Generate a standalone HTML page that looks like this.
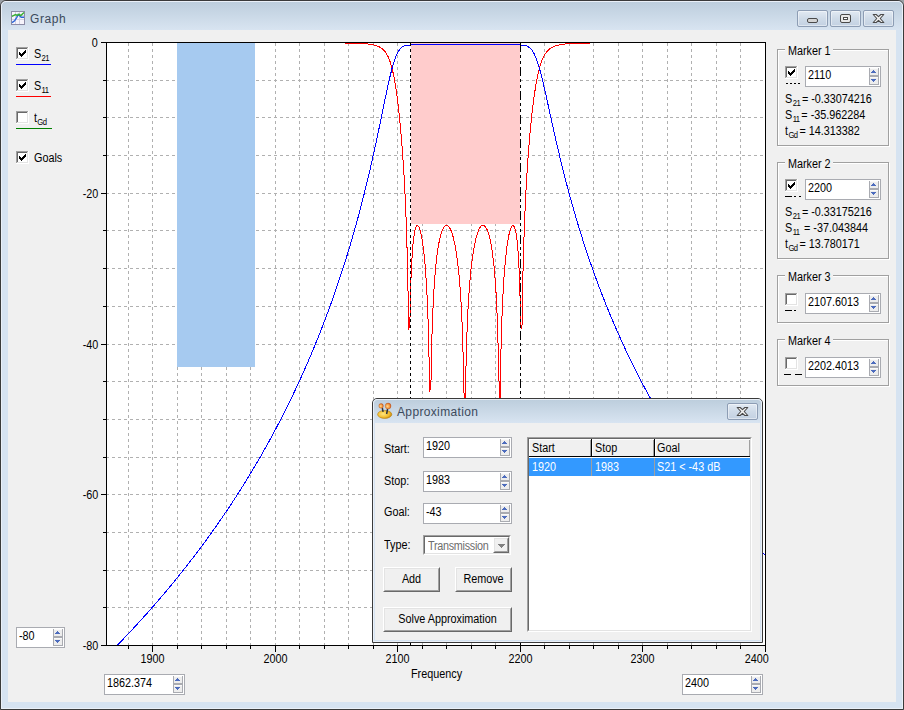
<!DOCTYPE html><html><head><meta charset="utf-8"><style>
*{margin:0;padding:0;box-sizing:content-box}
html,body{width:904px;height:710px;overflow:hidden;background:#9aa0a6}
body{position:relative;font-family:"Liberation Sans",sans-serif;font-size:11px;color:#000}
.t{position:absolute;white-space:pre;line-height:13px;font-size:12px;transform:scaleX(0.9);transform-origin:0 0}
.c{transform-origin:50% 0}.r{transform-origin:100% 0}
.abs{position:absolute}
.spin{position:absolute;border:1px solid #a9abb1;background:#fff}
.sp{position:absolute}
.cb{position:absolute}
svg{position:absolute;overflow:visible}
</style></head><body>
<div class="abs" style="left:0;top:0;width:902px;height:708px;border:1px solid #3a3a3a;border-radius:6px 6px 0 0;background:#d6e3f1"></div>
<div class="abs" style="left:1px;top:1px;width:900px;height:706px;border:1px solid #eaf0f8;border-radius:5px 5px 0 0;background:linear-gradient(#bdcedd,#d8e4f1 28px,#d6e3f1 28px)"></div>
<div class="abs" style="left:8px;top:30px;width:888px;height:672px;background:#f0f0f0"></div>
<svg style="left:11px;top:11px" width="14" height="14" shape-rendering="crispEdges"><rect x="0.5" y="0.5" width="13" height="13" fill="#f6f4fb" stroke="#8c8ca6"/><path d="M4.5 1 V13 M8.5 1 V13 M1 4.5 H13 M1 8.5 H13" stroke="#d4d2e4" stroke-width="1"/><path d="M1 11.6 L3.6 9.8 L5.8 6.3 L7.1 3.6 L8.9 5 L10.2 6.3 L13 6.3" stroke="#2a64d8" stroke-width="1.4" fill="none" shape-rendering="auto"/><path d="M0.9 5.4 L4.5 3.6 L6.3 4.5 L8 3.2 L9.8 4.5 L13 1.4" stroke="#38b030" stroke-width="1.4" fill="none" shape-rendering="auto"/></svg>
<div class="t" style="transform:none;left:30px;top:12px;font-size:12px;line-height:15px;letter-spacing:0.6px;color:#3c4a5c">Graph</div>
<div class="abs" style="left:797px;top:10px;width:29px;height:15px;border:1px solid #8d9db4;border-radius:2px;background:linear-gradient(#e2eaf3,#cfdbe8 50%,#c3d1e2);box-shadow:inset 0 0 0 1px rgba(255,255,255,0.45)"></div>
<svg style="left:797px;top:10px" width="31" height="17"><rect x="10.5" y="8.5" width="10" height="4" rx="1.5" fill="#d4d4d4" stroke="#4a4a4a"/></svg>
<div class="abs" style="left:830px;top:10px;width:29px;height:15px;border:1px solid #8d9db4;border-radius:2px;background:linear-gradient(#e2eaf3,#cfdbe8 50%,#c3d1e2);box-shadow:inset 0 0 0 1px rgba(255,255,255,0.45)"></div>
<svg style="left:830px;top:10px" width="31" height="17"><rect x="10.5" y="4.5" width="10" height="8" rx="1.5" fill="#e8e8e8" stroke="#4a4a4a"/><rect x="13.5" y="7.5" width="4" height="2" fill="#fff" stroke="#4a4a4a"/></svg>
<div class="abs" style="left:863px;top:10px;width:29px;height:15px;border:1px solid #8d9db4;border-radius:2px;background:linear-gradient(#e2eaf3,#cfdbe8 50%,#c3d1e2);box-shadow:inset 0 0 0 1px rgba(255,255,255,0.45)"></div>
<svg style="left:863px;top:10px" width="31" height="17"><path d="M10.2 4.5 L13.2 4.5 L15.5 6.6 L17.8 4.5 L20.8 4.5 L17.2 8.5 L20.8 12.5 L17.8 12.5 L15.5 10.4 L13.2 12.5 L10.2 12.5 L13.8 8.5 Z" fill="#f2f2f2" stroke="#4a4a4a" stroke-width="1.1" stroke-linejoin="round"/></svg>
<svg class="cb" style="left:16px;top:47px" width="13" height="13" shape-rendering="crispEdges"><rect x="0" y="0" width="13" height="13" fill="#ffffff"/><rect x="0" y="0" width="12" height="1" fill="#a0a0a0"/><rect x="0" y="0" width="1" height="12" fill="#a0a0a0"/><rect x="1" y="1" width="10" height="1" fill="#696969"/><rect x="1" y="1" width="1" height="10" fill="#696969"/><rect x="1" y="11" width="11" height="1" fill="#e3e3e3"/><rect x="11" y="1" width="1" height="11" fill="#e3e3e3"/><path d="M9 3h1v1h-1zM8 4h2v1h-2zM3 5h1v1h-1zM7 5h3v1h-3zM3 6h2v1h-2zM6 6h3v1h-3zM3 7h5v1h-5zM4 8h3v1h-3zM5 9h1v1h-1z" fill="#000"/></svg>
<svg class="cb" style="left:16px;top:79px" width="13" height="13" shape-rendering="crispEdges"><rect x="0" y="0" width="13" height="13" fill="#ffffff"/><rect x="0" y="0" width="12" height="1" fill="#a0a0a0"/><rect x="0" y="0" width="1" height="12" fill="#a0a0a0"/><rect x="1" y="1" width="10" height="1" fill="#696969"/><rect x="1" y="1" width="1" height="10" fill="#696969"/><rect x="1" y="11" width="11" height="1" fill="#e3e3e3"/><rect x="11" y="1" width="1" height="11" fill="#e3e3e3"/><path d="M9 3h1v1h-1zM8 4h2v1h-2zM3 5h1v1h-1zM7 5h3v1h-3zM3 6h2v1h-2zM6 6h3v1h-3zM3 7h5v1h-5zM4 8h3v1h-3zM5 9h1v1h-1z" fill="#000"/></svg>
<svg class="cb" style="left:16px;top:111px" width="13" height="13" shape-rendering="crispEdges"><rect x="0" y="0" width="13" height="13" fill="#ffffff"/><rect x="0" y="0" width="12" height="1" fill="#a0a0a0"/><rect x="0" y="0" width="1" height="12" fill="#a0a0a0"/><rect x="1" y="1" width="10" height="1" fill="#696969"/><rect x="1" y="1" width="1" height="10" fill="#696969"/><rect x="1" y="11" width="11" height="1" fill="#e3e3e3"/><rect x="11" y="1" width="1" height="11" fill="#e3e3e3"/></svg>
<svg class="cb" style="left:16px;top:151px" width="13" height="13" shape-rendering="crispEdges"><rect x="0" y="0" width="13" height="13" fill="#ffffff"/><rect x="0" y="0" width="12" height="1" fill="#a0a0a0"/><rect x="0" y="0" width="1" height="12" fill="#a0a0a0"/><rect x="1" y="1" width="10" height="1" fill="#696969"/><rect x="1" y="1" width="1" height="10" fill="#696969"/><rect x="1" y="11" width="11" height="1" fill="#e3e3e3"/><rect x="11" y="1" width="1" height="11" fill="#e3e3e3"/><path d="M9 3h1v1h-1zM8 4h2v1h-2zM3 5h1v1h-1zM7 5h3v1h-3zM3 6h2v1h-2zM6 6h3v1h-3zM3 7h5v1h-5zM4 8h3v1h-3zM5 9h1v1h-1z" fill="#000"/></svg>
<div class="t" style="left:34px;top:48px">S<span style="font-size:8.5px;position:relative;top:2.5px;margin-left:0.3px;letter-spacing:-0.5px">21</span></div>
<div class="t" style="left:34px;top:80px">S<span style="font-size:8.5px;position:relative;top:2.5px;margin-left:0.3px;letter-spacing:-0.5px">11</span></div>
<div class="t" style="left:34px;top:112px">t<span style="font-size:8.5px;position:relative;top:2.5px;margin-left:0.3px;letter-spacing:-0.5px">Gd</span></div>
<div class="t" style="left:34px;top:152px">Goals</div>
<div class="abs" style="left:16px;top:64px;width:35px;height:1px;background:#0000ff"></div>
<div class="abs" style="left:16px;top:96px;width:35px;height:1px;background:#ff0000"></div>
<div class="abs" style="left:16px;top:128px;width:36px;height:1px;background:#008000"></div>
<div class="spin" style="left:16px;top:627px;width:47px;height:19px">
<div class="t" style="left:2px;top:2px">-80</div>
<svg class="sp" style="left:36px;top:1px" width="10" height="17" shape-rendering="crispEdges"><rect x="1" y="0" width="8" height="16" fill="#ededed"/><rect x="1" y="0" width="8" height="1" fill="#fafafa"/><rect x="1" y="9" width="8" height="1" fill="#fafafa"/><rect x="0" y="0" width="1" height="17" fill="#a9abb1"/><rect x="9" y="0" width="1" height="17" fill="#a9abb1"/><rect x="0" y="16" width="10" height="1" fill="#a9abb1"/><rect x="0" y="7" width="10" height="2" fill="#a9abb1"/><path d="M4 2h1v1h-1zM3 3h3v1h-3zM2 4h5v1h-5zM2 11h5v1h-5zM3 12h3v1h-3zM4 13h1v1h-1z" fill="#4d6cbd"/></svg>
</div>
<div class="spin" style="left:104px;top:674px;width:79px;height:19px">
<div class="t" style="left:2px;top:2px">1862.374</div>
<svg class="sp" style="left:68px;top:1px" width="10" height="17" shape-rendering="crispEdges"><rect x="1" y="0" width="8" height="16" fill="#ededed"/><rect x="1" y="0" width="8" height="1" fill="#fafafa"/><rect x="1" y="9" width="8" height="1" fill="#fafafa"/><rect x="0" y="0" width="1" height="17" fill="#a9abb1"/><rect x="9" y="0" width="1" height="17" fill="#a9abb1"/><rect x="0" y="16" width="10" height="1" fill="#a9abb1"/><rect x="0" y="7" width="10" height="2" fill="#a9abb1"/><path d="M4 2h1v1h-1zM3 3h3v1h-3zM2 4h5v1h-5zM2 11h5v1h-5zM3 12h3v1h-3zM4 13h1v1h-1z" fill="#4d6cbd"/></svg>
</div>
<div class="spin" style="left:682px;top:674px;width:79px;height:19px">
<div class="t" style="left:2px;top:2px">2400</div>
<svg class="sp" style="left:68px;top:1px" width="10" height="17" shape-rendering="crispEdges"><rect x="1" y="0" width="8" height="16" fill="#ededed"/><rect x="1" y="0" width="8" height="1" fill="#fafafa"/><rect x="1" y="9" width="8" height="1" fill="#fafafa"/><rect x="0" y="0" width="1" height="17" fill="#a9abb1"/><rect x="9" y="0" width="1" height="17" fill="#a9abb1"/><rect x="0" y="16" width="10" height="1" fill="#a9abb1"/><rect x="0" y="7" width="10" height="2" fill="#a9abb1"/><path d="M4 2h1v1h-1zM3 3h3v1h-3zM2 4h5v1h-5zM2 11h5v1h-5zM3 12h3v1h-3zM4 13h1v1h-1z" fill="#4d6cbd"/></svg>
</div>
<svg style="left:0;top:0" width="904" height="710" shape-rendering="crispEdges"><rect x="106" y="42" width="660" height="604" fill="#fff"/><path d="M128.5 43V645M152.5 43V645M177.5 43V645M201.5 43V645M226.5 43V645M250.5 43V645M275.5 43V645M299.5 43V645M324.5 43V645M348.5 43V645M373.5 43V645M397.5 43V645M422.5 43V645M446.5 43V645M471.5 43V645M495.5 43V645M520.5 43V645M544.5 43V645M569.5 43V645M593.5 43V645M618.5 43V645M642.5 43V645M667.5 43V645M691.5 43V645M716.5 43V645M740.5 43V645M106 80.5H765M106 117.5H765M106 155.5H765M106 193.5H765M106 230.5H765M106 268.5H765M106 306.5H765M106 344.5H765M106 381.5H765M106 419.5H765M106 457.5H765M106 494.5H765M106 532.5H765M106 570.5H765M106 607.5H765" stroke="#b0b0b0" stroke-width="1" stroke-dasharray="3 3" fill="none"/><rect x="177" y="43" width="78" height="324" fill="#a6caf0"/><rect x="411" y="43" width="109" height="181" fill="#ffcccc"/><polyline points="344.82,43.01 345.68,43.02 346.84,43.04 348.01,43.06 349.18,43.09 350.35,43.11 351.51,43.14 352.68,43.17 353.85,43.20 355.02,43.23 356.18,43.27 357.35,43.31 358.52,43.36 359.69,43.41 360.85,43.47 362.02,43.53 363.19,43.60 364.36,43.68 365.52,43.77 366.69,43.87 367.86,43.99 369.03,44.13 370.19,44.28 371.36,44.46 372.53,44.67 373.69,44.91 374.86,45.20 376.03,45.54 377.20,45.93 378.36,46.41 379.53,46.97 380.70,47.65 381.87,48.47 383.03,49.45 384.20,50.64 385.37,52.08 386.54,53.82 387.70,55.93 388.87,58.48 390.04,61.55 391.21,65.24 392.37,69.64 393.54,74.83 394.71,80.93 395.88,88.01 397.04,96.17 398.21,105.50 399.38,116.12 400.54,128.17 401.71,141.88 402.88,157.61 404.05,175.95 405.21,198.01 406.38,225.99 407.55,265.29 408.72,330.47 409.88,321.86 411.05,276.56 412.22,253.48 413.39,240.14 414.55,232.15 415.72,227.65 416.89,225.70 418.06,225.81 419.22,227.70 420.39,231.28 421.56,236.54 422.73,243.64 423.89,252.87 425.06,264.79 426.23,280.45 427.39,301.94 428.56,334.38 429.73,391.78 430.90,384.55 432.06,331.84 433.23,302.14 434.40,282.46 435.57,268.18 436.73,257.31 437.90,248.81 439.07,242.11 440.24,236.82 441.40,232.71 442.57,229.60 443.74,227.38 444.91,225.97 446.07,225.31 447.24,225.38 448.41,226.15 449.58,227.64 450.74,229.87 451.91,232.86 453.08,236.70 454.24,241.47 455.41,247.32 456.58,254.44 457.75,263.15 458.91,273.92 460.08,287.55 461.25,305.52 462.42,330.97 463.58,372.32 464.75,428.00 465.92,368.84 467.09,329.04 468.25,304.26 469.42,286.67 470.59,273.28 471.76,262.68 472.92,254.11 474.09,247.09 475.26,241.32 476.43,236.61 477.59,232.83 478.76,229.86 479.93,227.66 481.09,226.18 482.26,225.39 483.43,225.30 484.60,225.90 485.76,227.24 486.93,229.35 488.10,232.31 489.27,236.23 490.43,241.24 491.60,247.58 492.77,255.55 493.94,265.67 495.10,278.77 496.27,296.44 497.44,322.07 498.61,364.81 499.77,412.25 500.94,350.79 502.11,312.58 503.28,288.38 504.44,271.13 505.61,258.09 506.78,247.96 507.94,240.07 509.11,234.03 510.28,229.64 511.45,226.81 512.61,225.57 513.78,226.05 514.95,228.55 516.12,233.59 517.28,242.13 518.45,256.09 519.62,279.98 520.79,326.13 521.95,328.52 523.12,266.16 524.29,227.98 525.46,200.61 526.62,178.99 527.79,160.97 528.96,145.49 530.13,131.95 531.29,120.02 532.46,109.45 533.63,100.09 534.79,91.84 535.96,84.61 537.13,78.32 538.30,72.88 539.46,68.23 540.63,64.27 541.80,60.92 542.97,58.11 544.13,55.75 545.30,53.78 546.47,52.14 547.64,50.77 548.80,49.62 549.97,48.67 551.14,47.87 552.31,47.19 553.47,46.63 554.64,46.15 555.81,45.74 556.98,45.40 558.14,45.10 559.31,44.85 560.48,44.63 561.64,44.44 562.81,44.27 563.98,44.13 565.15,44.00 566.31,43.89 567.48,43.79 568.65,43.71 569.82,43.63 570.98,43.56 572.15,43.50 573.32,43.44 574.49,43.39 575.65,43.35 576.82,43.31 577.99,43.27 579.16,43.23 580.32,43.20 581.49,43.17 582.66,43.15 583.82,43.12 584.99,43.10 586.16,43.08 587.33,43.06 588.49,43.04 589.66,43.02 590.83,43.00 591.69,42.99" fill="none" stroke="#ff0000" stroke-width="1"/><polyline points="106.50,645.50 107.05,645.50 107.60,645.50 108.15,645.50 108.70,645.50 109.25,645.50 109.80,645.50 110.35,645.50 110.90,645.50 111.45,645.50 112.00,645.50 112.55,645.50 113.10,645.50 113.65,645.50 114.19,645.50 114.74,645.50 115.29,645.50 115.84,645.50 116.39,645.50 116.94,645.50 117.49,645.07 118.04,644.50 118.59,643.93 119.14,643.36 119.69,642.79 120.24,642.22 120.79,641.65 121.34,641.08 121.89,640.50 122.44,639.93 122.99,639.35 123.54,638.78 124.09,638.20 124.64,637.62 125.19,637.04 125.74,636.46 126.29,635.88 126.84,635.30 127.39,634.72 127.94,634.14 128.48,633.55 129.03,632.97 129.58,632.38 130.13,631.80 130.68,631.21 131.23,630.62 131.78,630.03 132.33,629.44 132.88,628.85 133.43,628.26 133.98,627.66 134.53,627.07 135.08,626.47 135.63,625.88 136.18,625.28 136.73,624.68 137.28,624.08 137.83,623.48 138.38,622.88 138.93,622.28 139.48,621.68 140.03,621.07 140.58,620.47 141.13,619.86 141.68,619.26 142.23,618.65 142.78,618.04 143.32,617.43 143.87,616.82 144.42,616.21 144.97,615.60 145.52,614.98 146.07,614.37 146.62,613.75 147.17,613.14 147.72,612.52 148.27,611.90 148.82,611.28 149.37,610.66 149.92,610.04 150.47,609.42 151.02,608.79 151.57,608.17 152.12,607.54 152.67,606.92 153.22,606.29 153.77,605.66 154.32,605.03 154.87,604.40 155.42,603.77 155.97,603.13 156.52,602.50 157.07,601.86 157.62,601.23 158.16,600.59 158.71,599.95 159.26,599.31 159.81,598.67 160.36,598.03 160.91,597.38 161.46,596.74 162.01,596.09 162.56,595.45 163.11,594.80 163.66,594.15 164.21,593.50 164.76,592.85 165.31,592.20 165.86,591.55 166.41,590.89 166.96,590.24 167.51,589.58 168.06,588.92 168.61,588.26 169.16,587.60 169.71,586.94 170.26,586.28 170.81,585.61 171.36,584.95 171.91,584.28 172.45,583.61 173.00,582.95 173.55,582.28 174.10,581.60 174.65,580.93 175.20,580.26 175.75,579.58 176.30,578.91 176.85,578.23 177.40,577.55 177.95,576.87 178.50,576.19 179.05,575.51 179.60,574.82 180.15,574.14 180.70,573.45 181.25,572.77 181.80,572.08 182.35,571.39 182.90,570.69 183.45,570.00 184.00,569.31 184.55,568.61 185.10,567.92 185.65,567.22 186.20,566.52 186.75,565.82 187.29,565.12 187.84,564.41 188.39,563.71 188.94,563.00 189.49,562.29 190.04,561.58 190.59,560.87 191.14,560.16 191.69,559.45 192.24,558.73 192.79,558.02 193.34,557.30 193.89,556.58 194.44,555.86 194.99,555.14 195.54,554.42 196.09,553.69 196.64,552.97 197.19,552.24 197.74,551.51 198.29,550.78 198.84,550.05 199.39,549.31 199.94,548.58 200.49,547.84 201.04,547.11 201.59,546.37 202.13,545.63 202.68,544.88 203.23,544.14 203.78,543.39 204.33,542.65 204.88,541.90 205.43,541.15 205.98,540.40 206.53,539.64 207.08,538.89 207.63,538.13 208.18,537.37 208.73,536.61 209.28,535.85 209.83,535.09 210.38,534.32 210.93,533.56 211.48,532.79 212.03,532.02 212.58,531.25 213.13,530.48 213.68,529.70 214.23,528.92 214.78,528.15 215.33,527.37 215.88,526.59 216.42,525.80 216.97,525.02 217.52,524.23 218.07,523.44 218.62,522.65 219.17,521.86 219.72,521.07 220.27,520.27 220.82,519.47 221.37,518.68 221.92,517.87 222.47,517.07 223.02,516.27 223.57,515.46 224.12,514.65 224.67,513.84 225.22,513.03 225.77,512.22 226.32,511.40 226.87,510.58 227.42,509.77 227.97,508.94 228.52,508.12 229.07,507.30 229.62,506.47 230.17,505.64 230.72,504.81 231.26,503.98 231.81,503.14 232.36,502.30 232.91,501.46 233.46,500.62 234.01,499.78 234.56,498.94 235.11,498.09 235.66,497.24 236.21,496.39 236.76,495.54 237.31,494.68 237.86,493.82 238.41,492.96 238.96,492.10 239.51,491.24 240.06,490.37 240.61,489.50 241.16,488.63 241.71,487.76 242.26,486.89 242.81,486.01 243.36,485.13 243.91,484.25 244.46,483.37 245.01,482.48 245.56,481.59 246.10,480.70 246.65,479.81 247.20,478.91 247.75,478.02 248.30,477.12 248.85,476.22 249.40,475.31 249.95,474.41 250.50,473.50 251.05,472.58 251.60,471.67 252.15,470.75 252.70,469.84 253.25,468.92 253.80,467.99 254.35,467.07 254.90,466.14 255.45,465.21 256.00,464.27 256.55,463.34 257.10,462.40 257.65,461.46 258.20,460.51 258.75,459.57 259.30,458.62 259.85,457.66 260.39,456.71 260.94,455.75 261.49,454.79 262.04,453.83 262.59,452.87 263.14,451.90 263.69,450.93 264.24,449.95 264.79,448.98 265.34,448.00 265.89,447.02 266.44,446.03 266.99,445.04 267.54,444.05 268.09,443.06 268.64,442.06 269.19,441.07 269.74,440.06 270.29,439.06 270.84,438.05 271.39,437.04 271.94,436.03 272.49,435.01 273.04,433.99 273.59,432.96 274.14,431.94 274.69,430.91 275.23,429.88 275.78,428.84 276.33,427.80 276.88,426.76 277.43,425.71 277.98,424.66 278.53,423.61 279.08,422.56 279.63,421.50 280.18,420.44 280.73,419.37 281.28,418.30 281.83,417.23 282.38,416.15 282.93,415.08 283.48,413.99 284.03,412.91 284.58,411.82 285.13,410.72 285.68,409.63 286.23,408.53 286.78,407.42 287.33,406.31 287.88,405.20 288.43,404.09 288.98,402.97 289.53,401.85 290.07,400.72 290.62,399.59 291.17,398.46 291.72,397.32 292.27,396.17 292.82,395.03 293.37,393.88 293.92,392.72 294.47,391.57 295.02,390.40 295.57,389.24 296.12,388.07 296.67,386.89 297.22,385.71 297.77,384.53 298.32,383.34 298.87,382.15 299.42,380.96 299.97,379.76 300.52,378.55 301.07,377.34 301.62,376.13 302.17,374.91 302.72,373.69 303.27,372.46 303.82,371.23 304.36,369.99 304.91,368.75 305.46,367.50 306.01,366.25 306.56,365.00 307.11,363.74 307.66,362.47 308.21,361.20 308.76,359.92 309.31,358.64 309.86,357.36 310.41,356.07 310.96,354.77 311.51,353.47 312.06,352.16 312.61,350.85 313.16,349.53 313.71,348.21 314.26,346.88 314.81,345.55 315.36,344.21 315.91,342.86 316.46,341.51 317.01,340.16 317.56,338.79 318.11,337.43 318.66,336.05 319.20,334.67 319.75,333.29 320.30,331.90 320.85,330.50 321.40,329.09 321.95,327.68 322.50,326.27 323.05,324.84 323.60,323.41 324.15,321.98 324.70,320.53 325.25,319.08 325.80,317.63 326.35,316.17 326.90,314.70 327.45,313.22 328.00,311.74 328.55,310.25 329.10,308.75 329.65,307.24 330.20,305.73 330.75,304.21 331.30,302.68 331.85,301.15 332.40,299.61 332.95,298.06 333.49,296.50 334.04,294.94 334.59,293.36 335.14,291.78 335.69,290.19 336.24,288.59 336.79,286.99 337.34,285.37 337.89,283.75 338.44,282.12 338.99,280.48 339.54,278.83 340.09,277.17 340.64,275.50 341.19,273.83 341.74,272.14 342.29,270.45 342.84,268.74 343.39,267.03 343.94,265.30 344.49,263.57 345.04,261.83 345.59,260.07 346.14,258.31 346.69,256.54 347.24,254.75 347.79,252.96 348.33,251.15 348.88,249.33 349.43,247.50 349.98,245.67 350.53,243.82 351.08,241.95 351.63,240.08 352.18,238.19 352.73,236.30 353.28,234.39 353.83,232.47 354.38,230.53 354.93,228.59 355.48,226.63 356.03,224.65 356.58,222.67 357.13,220.67 357.68,218.66 358.23,216.63 358.78,214.59 359.33,212.54 359.88,210.47 360.43,208.39 360.98,206.29 361.53,204.18 362.08,202.05 362.63,199.91 363.17,197.76 363.72,195.58 364.27,193.40 364.82,191.19 365.37,188.97 365.92,186.73 366.47,184.48 367.02,182.21 367.57,179.93 368.12,177.62 368.67,175.30 369.22,172.97 369.77,170.61 370.32,168.24 370.87,165.85 371.42,163.45 371.97,161.02 372.52,158.58 373.07,156.12 373.62,153.65 374.17,151.16 374.72,148.65 375.27,146.12 375.82,143.58 376.37,141.02 376.92,138.44 377.46,135.86 378.01,133.25 378.56,130.64 379.11,128.01 379.66,125.37 380.21,122.72 380.76,120.06 381.31,117.39 381.86,114.72 382.41,112.04 382.96,109.37 383.51,106.69 384.06,104.02 384.61,101.36 385.16,98.71 385.71,96.08 386.26,93.47 386.81,90.87 387.36,88.31 387.91,85.79 388.46,83.30 389.01,80.86 389.56,78.47 390.11,76.14 390.66,73.87 391.21,71.67 391.76,69.55 392.30,67.51 392.85,65.56 393.40,63.70 393.95,61.93 394.50,60.27 395.05,58.70 395.60,57.24 396.15,55.88 396.70,54.63 397.25,53.48 397.80,52.42 398.35,51.47 398.90,50.60 399.45,49.83 400.00,49.14 400.55,48.52 401.10,47.98 401.65,47.51 402.20,47.09 402.75,46.73 403.30,46.42 403.85,46.16 404.40,45.94 404.95,45.75 405.50,45.59 406.05,45.45 406.60,45.34 407.14,45.25 407.69,45.18 408.24,45.12 408.79,45.07 409.34,45.04 409.89,45.00 410.44,44.98 410.99,44.96 411.54,44.94 412.09,44.93 412.64,44.92 413.19,44.90 413.74,44.89 414.29,44.88 414.84,44.87 415.39,44.86 415.94,44.85 416.49,44.83 417.04,44.82 417.59,44.80 418.14,44.79 418.69,44.77 419.24,44.75 419.79,44.73 420.34,44.72 420.89,44.70 421.43,44.68 421.98,44.66 422.53,44.64 423.08,44.62 423.63,44.60 424.18,44.59 424.73,44.57 425.28,44.55 425.83,44.54 426.38,44.52 426.93,44.51 427.48,44.50 428.03,44.48 428.58,44.47 429.13,44.46 429.68,44.46 430.23,44.45 430.78,44.44 431.33,44.44 431.88,44.43 432.43,44.43 432.98,44.42 433.53,44.42 434.08,44.42 434.63,44.42 435.18,44.42 435.73,44.42 436.27,44.42 436.82,44.42 437.37,44.42 437.92,44.42 438.47,44.42 439.02,44.43 439.57,44.43 440.12,44.43 440.67,44.43 441.22,44.43 441.77,44.43 442.32,44.43 442.87,44.43 443.42,44.43 443.97,44.43 444.52,44.43 445.07,44.43 445.62,44.43 446.17,44.43 446.72,44.42 447.27,44.42 447.82,44.42 448.37,44.41 448.92,44.41 449.47,44.40 450.02,44.40 450.57,44.39 451.11,44.39 451.66,44.38 452.21,44.37 452.76,44.37 453.31,44.36 453.86,44.35 454.41,44.35 454.96,44.34 455.51,44.33 456.06,44.33 456.61,44.32 457.16,44.31 457.71,44.31 458.26,44.30 458.81,44.29 459.36,44.29 459.91,44.28 460.46,44.28 461.01,44.27 461.56,44.27 462.11,44.27 462.66,44.27 463.21,44.26 463.76,44.26 464.31,44.26 464.86,44.26 465.40,44.26 465.95,44.26 466.50,44.26 467.05,44.27 467.60,44.27 468.15,44.27 468.70,44.28 469.25,44.28 469.80,44.29 470.35,44.29 470.90,44.30 471.45,44.30 472.00,44.31 472.55,44.31 473.10,44.32 473.65,44.33 474.20,44.34 474.75,44.34 475.30,44.35 475.85,44.36 476.40,44.36 476.95,44.37 477.50,44.38 478.05,44.38 478.60,44.39 479.15,44.39 479.70,44.40 480.24,44.41 480.79,44.41 481.34,44.41 481.89,44.42 482.44,44.42 482.99,44.42 483.54,44.43 484.09,44.43 484.64,44.43 485.19,44.43 485.74,44.43 486.29,44.43 486.84,44.43 487.39,44.43 487.94,44.43 488.49,44.43 489.04,44.43 489.59,44.43 490.14,44.43 490.69,44.43 491.24,44.42 491.79,44.42 492.34,44.42 492.89,44.42 493.44,44.42 493.99,44.42 494.54,44.42 495.08,44.42 495.63,44.42 496.18,44.42 496.73,44.42 497.28,44.43 497.83,44.43 498.38,44.43 498.93,44.44 499.48,44.45 500.03,44.45 500.58,44.46 501.13,44.47 501.68,44.48 502.23,44.49 502.78,44.50 503.33,44.52 503.88,44.53 504.43,44.54 504.98,44.56 505.53,44.58 506.08,44.59 506.63,44.61 507.18,44.63 507.73,44.65 508.28,44.66 508.83,44.68 509.37,44.70 509.92,44.72 510.47,44.74 511.02,44.75 511.57,44.77 512.12,44.79 512.67,44.80 513.22,44.82 513.77,44.83 514.32,44.84 514.87,44.86 515.42,44.87 515.97,44.88 516.52,44.89 517.07,44.90 517.62,44.91 518.17,44.92 518.72,44.94 519.27,44.95 519.82,44.97 520.37,44.99 520.92,45.02 521.47,45.05 522.02,45.09 522.57,45.14 523.12,45.20 523.67,45.27 524.21,45.36 524.76,45.46 525.31,45.59 525.86,45.75 526.41,45.93 526.96,46.14 527.51,46.39 528.06,46.67 528.61,47.00 529.16,47.38 529.71,47.82 530.26,48.31 530.81,48.87 531.36,49.49 531.91,50.19 532.46,50.97 533.01,51.82 533.56,52.76 534.11,53.79 534.66,54.91 535.21,56.12 535.76,57.42 536.31,58.82 536.86,60.31 537.41,61.89 537.96,63.55 538.51,65.30 539.05,67.14 539.60,69.05 540.15,71.04 540.70,73.09 541.25,75.21 541.80,77.38 542.35,79.61 542.90,81.89 543.45,84.21 544.00,86.57 544.55,88.96 545.10,91.38 545.65,93.82 546.20,96.29 546.75,98.77 547.30,101.26 547.85,103.76 548.40,106.27 548.95,108.78 549.50,111.29 550.05,113.80 550.60,116.31 551.15,118.81 551.70,121.31 552.25,123.80 552.80,126.27 553.34,128.74 553.89,131.20 554.44,133.65 554.99,136.08 555.54,138.50 556.09,140.91 556.64,143.30 557.19,145.67 557.74,148.03 558.29,150.38 558.84,152.71 559.39,155.02 559.94,157.32 560.49,159.60 561.04,161.87 561.59,164.12 562.14,166.36 562.69,168.57 563.24,170.78 563.79,172.96 564.34,175.13 564.89,177.29 565.44,179.43 565.99,181.56 566.54,183.66 567.09,185.76 567.64,187.84 568.18,189.90 568.73,191.95 569.28,193.99 569.83,196.01 570.38,198.01 570.93,200.01 571.48,201.99 572.03,203.95 572.58,205.90 573.13,207.84 573.68,209.77 574.23,211.68 574.78,213.58 575.33,215.46 575.88,217.34 576.43,219.20 576.98,221.05 577.53,222.88 578.08,224.71 578.63,226.52 579.18,228.32 579.73,230.11 580.28,231.89 580.83,233.66 581.38,235.41 581.93,237.16 582.47,238.89 583.02,240.62 583.57,242.33 584.12,244.03 584.67,245.73 585.22,247.41 585.77,249.08 586.32,250.74 586.87,252.40 587.42,254.04 587.97,255.67 588.52,257.30 589.07,258.91 589.62,260.52 590.17,262.12 590.72,263.70 591.27,265.28 591.82,266.85 592.37,268.41 592.92,269.97 593.47,271.51 594.02,273.05 594.57,274.57 595.12,276.09 595.67,277.60 596.22,279.11 596.77,280.60 597.31,282.09 597.86,283.57 598.41,285.04 598.96,286.50 599.51,287.96 600.06,289.41 600.61,290.85 601.16,292.29 601.71,293.72 602.26,295.14 602.81,296.55 603.36,297.96 603.91,299.36 604.46,300.75 605.01,302.13 605.56,303.51 606.11,304.89 606.66,306.25 607.21,307.61 607.76,308.96 608.31,310.31 608.86,311.65 609.41,312.99 609.96,314.31 610.51,315.64 611.06,316.95 611.61,318.26 612.15,319.57 612.70,320.86 613.25,322.16 613.80,323.44 614.35,324.72 614.90,326.00 615.45,327.27 616.00,328.53 616.55,329.79 617.10,331.04 617.65,332.29 618.20,333.53 618.75,334.77 619.30,336.00 619.85,337.23 620.40,338.45 620.95,339.67 621.50,340.88 622.05,342.08 622.60,343.28 623.15,344.48 623.70,345.67 624.25,346.86 624.80,348.04 625.35,349.21 625.90,350.39 626.44,351.55 626.99,352.72 627.54,353.87 628.09,355.03 628.64,356.18 629.19,357.32 629.74,358.46 630.29,359.59 630.84,360.73 631.39,361.85 631.94,362.97 632.49,364.09 633.04,365.20 633.59,366.31 634.14,367.42 634.69,368.52 635.24,369.62 635.79,370.71 636.34,371.80 636.89,372.88 637.44,373.96 637.99,375.04 638.54,376.11 639.09,377.18 639.64,378.24 640.19,379.31 640.74,380.36 641.28,381.42 641.83,382.46 642.38,383.51 642.93,384.55 643.48,385.59 644.03,386.63 644.58,387.66 645.13,388.68 645.68,389.71 646.23,390.73 646.78,391.74 647.33,392.76 647.88,393.77 648.43,394.77 648.98,395.77 649.53,396.77 650.08,397.77 650.63,398.76 651.18,399.75 651.73,400.74 652.28,401.72 652.83,402.70 653.38,403.67 653.93,404.65 654.48,405.62 655.03,406.58 655.58,407.55 656.12,408.51 656.67,409.46 657.22,410.42 657.77,411.37 658.32,412.32 658.87,413.26 659.42,414.20 659.97,415.14 660.52,416.08 661.07,417.01 661.62,417.94 662.17,418.86 662.72,419.79 663.27,420.71 663.82,421.63 664.37,422.54 664.92,423.45 665.47,424.36 666.02,425.27 666.57,426.17 667.12,427.07 667.67,427.97 668.22,428.87 668.77,429.76 669.32,430.65 669.87,431.54 670.41,432.42 670.96,433.31 671.51,434.19 672.06,435.06 672.61,435.94 673.16,436.81 673.71,437.68 674.26,438.54 674.81,439.41 675.36,440.27 675.91,441.13 676.46,441.99 677.01,442.84 677.56,443.69 678.11,444.54 678.66,445.39 679.21,446.23 679.76,447.07 680.31,447.91 680.86,448.75 681.41,449.58 681.96,450.42 682.51,451.25 683.06,452.07 683.61,452.90 684.16,453.72 684.71,454.54 685.25,455.36 685.80,456.18 686.35,456.99 686.90,457.80 687.45,458.61 688.00,459.42 688.55,460.22 689.10,461.03 689.65,461.83 690.20,462.63 690.75,463.42 691.30,464.22 691.85,465.01 692.40,465.80 692.95,466.59 693.50,467.37 694.05,468.16 694.60,468.94 695.15,469.72 695.70,470.49 696.25,471.27 696.80,472.04 697.35,472.81 697.90,473.58 698.45,474.35 699.00,475.12 699.55,475.88 700.09,476.64 700.64,477.40 701.19,478.16 701.74,478.91 702.29,479.67 702.84,480.42 703.39,481.17 703.94,481.92 704.49,482.66 705.04,483.41 705.59,484.15 706.14,484.89 706.69,485.63 707.24,486.36 707.79,487.10 708.34,487.83 708.89,488.56 709.44,489.29 709.99,490.02 710.54,490.75 711.09,491.47 711.64,492.19 712.19,492.91 712.74,493.63 713.29,494.35 713.84,495.06 714.38,495.78 714.93,496.49 715.48,497.20 716.03,497.91 716.58,498.61 717.13,499.32 717.68,500.02 718.23,500.72 718.78,501.42 719.33,502.12 719.88,502.82 720.43,503.51 720.98,504.21 721.53,504.90 722.08,505.59 722.63,506.28 723.18,506.96 723.73,507.65 724.28,508.33 724.83,509.01 725.38,509.69 725.93,510.37 726.48,511.05 727.03,511.73 727.58,512.40 728.13,513.07 728.68,513.74 729.22,514.41 729.77,515.08 730.32,515.75 730.87,516.41 731.42,517.08 731.97,517.74 732.52,518.40 733.07,519.06 733.62,519.72 734.17,520.37 734.72,521.03 735.27,521.68 735.82,522.33 736.37,522.98 736.92,523.63 737.47,524.28 738.02,524.93 738.57,525.57 739.12,526.21 739.67,526.86 740.22,527.50 740.77,528.14 741.32,528.77 741.87,529.41 742.42,530.04 742.97,530.68 743.52,531.31 744.06,531.94 744.61,532.57 745.16,533.20 745.71,533.83 746.26,534.45 746.81,535.08 747.36,535.70 747.91,536.32 748.46,536.94 749.01,537.56 749.56,538.18 750.11,538.79 750.66,539.41 751.21,540.02 751.76,540.63 752.31,541.25 752.86,541.86 753.41,542.46 753.96,543.07 754.51,543.68 755.06,544.28 755.61,544.89 756.16,545.49 756.71,546.09 757.26,546.69 757.81,547.29 758.35,547.89 758.90,548.48 759.45,549.08 760.00,549.67 760.55,550.26 761.10,550.86 761.65,551.45 762.20,552.04 762.75,552.62 763.30,553.21 763.85,553.80 764.40,554.38 764.95,554.96 765.50,555.55" fill="none" stroke="#0000ff" stroke-width="1"/><path d="M410.5 43V645" stroke="#000" stroke-dasharray="3 3"/><path d="M520.5 43V645" stroke="#000" stroke-dasharray="9 3 3 3 3 3"/><path d="M106.5 42V646 M106 645.5H766 M765.5 42V646 M106 42.5H766" stroke="#000"/><path d="M101 42.5H106M103 80.5H106M103 117.5H106M103 155.5H106M101 193.5H106M103 230.5H106M103 268.5H106M103 306.5H106M101 344.5H106M103 381.5H106M103 419.5H106M103 457.5H106M101 494.5H106M103 532.5H106M103 570.5H106M103 607.5H106M101 645.5H106M128.5 646V649M152.5 646V652M177.5 646V649M201.5 646V649M226.5 646V649M250.5 646V649M275.5 646V652M299.5 646V649M324.5 646V649M348.5 646V649M373.5 646V649M397.5 646V652M422.5 646V649M446.5 646V649M471.5 646V649M495.5 646V649M520.5 646V652M544.5 646V649M569.5 646V649M593.5 646V649M618.5 646V649M642.5 646V652M667.5 646V649M691.5 646V649M716.5 646V649M740.5 646V649M765.5 646V652" stroke="#000"/></svg>
<div class="t r" style="right:806px;top:37px">0</div>
<div class="t r" style="right:806px;top:188px">-20</div>
<div class="t r" style="right:806px;top:339px">-40</div>
<div class="t r" style="right:806px;top:489px">-60</div>
<div class="t r" style="right:806px;top:640px">-80</div>
<div class="t c" style="left:112px;width:81px;text-align:center;top:653px">1900</div>
<div class="t c" style="left:235px;width:81px;text-align:center;top:653px">2000</div>
<div class="t c" style="left:357px;width:81px;text-align:center;top:653px">2100</div>
<div class="t c" style="left:480px;width:81px;text-align:center;top:653px">2200</div>
<div class="t c" style="left:602px;width:81px;text-align:center;top:653px">2300</div>
<div class="t r" style="right:135px;top:653px">2400</div>
<div class="t" style="left:411px;top:668px">Frequency</div>
<div class="abs" style="left:778px;top:50px;width:110px;height:95px;border:1px solid #fff"></div>
<div class="abs" style="left:777px;top:49px;width:110px;height:95px;border:1px solid #a0a0a0"></div>
<div class="abs" style="left:785px;top:48px;width:48px;height:3px;background:#f0f0f0"></div>
<div class="t" style="left:788px;top:45px">Marker 1</div>
<svg class="cb" style="left:785px;top:66px" width="13" height="13" shape-rendering="crispEdges"><rect x="0" y="0" width="13" height="13" fill="#ffffff"/><rect x="0" y="0" width="12" height="1" fill="#a0a0a0"/><rect x="0" y="0" width="1" height="12" fill="#a0a0a0"/><rect x="1" y="1" width="10" height="1" fill="#696969"/><rect x="1" y="1" width="1" height="10" fill="#696969"/><rect x="1" y="11" width="11" height="1" fill="#e3e3e3"/><rect x="11" y="1" width="1" height="11" fill="#e3e3e3"/><path d="M9 3h1v1h-1zM8 4h2v1h-2zM3 5h1v1h-1zM7 5h3v1h-3zM3 6h2v1h-2zM6 6h3v1h-3zM3 7h5v1h-5zM4 8h3v1h-3zM5 9h1v1h-1z" fill="#000"/></svg>
<div class="spin" style="left:805px;top:66px;width:74px;height:19px">
<div class="t" style="left:2px;top:2px">2110</div>
<svg class="sp" style="left:63px;top:1px" width="10" height="17" shape-rendering="crispEdges"><rect x="1" y="0" width="8" height="16" fill="#ededed"/><rect x="1" y="0" width="8" height="1" fill="#fafafa"/><rect x="1" y="9" width="8" height="1" fill="#fafafa"/><rect x="0" y="0" width="1" height="17" fill="#a9abb1"/><rect x="9" y="0" width="1" height="17" fill="#a9abb1"/><rect x="0" y="16" width="10" height="1" fill="#a9abb1"/><rect x="0" y="7" width="10" height="2" fill="#a9abb1"/><path d="M4 2h1v1h-1zM3 3h3v1h-3zM2 4h5v1h-5zM2 11h5v1h-5zM3 12h3v1h-3zM4 13h1v1h-1z" fill="#4d6cbd"/></svg>
</div>
<svg style="left:785px;top:83px" width="20" height="1" shape-rendering="crispEdges"><rect x="1" y="0" width="2" height="1" fill="#000"/><rect x="5" y="0" width="2" height="1" fill="#000"/><rect x="9" y="0" width="2" height="1" fill="#000"/><rect x="13" y="0" width="2" height="1" fill="#000"/></svg>
<div class="t" style="left:785px;top:93px">S<span style="font-size:8.5px;position:relative;top:3px;margin-left:0.5px;letter-spacing:-0.6px;color:#000">21</span><span style="margin-left:2px">=</span> -0.33074216</div>
<div class="t" style="left:785px;top:109px">S<span style="font-size:8.5px;position:relative;top:3px;margin-left:0.5px;letter-spacing:-0.6px;color:#000">11</span><span style="margin-left:2px">=</span> -35.962284</div>
<div class="t" style="left:785px;top:125px">t<span style="font-size:8.5px;position:relative;top:3px;margin-left:0.5px;letter-spacing:-0.6px;color:#000">Gd</span><span style="margin-left:2px">=</span> 14.313382</div>
<div class="abs" style="left:778px;top:163px;width:110px;height:95px;border:1px solid #fff"></div>
<div class="abs" style="left:777px;top:162px;width:110px;height:95px;border:1px solid #a0a0a0"></div>
<div class="abs" style="left:785px;top:161px;width:48px;height:3px;background:#f0f0f0"></div>
<div class="t" style="left:788px;top:158px">Marker 2</div>
<svg class="cb" style="left:785px;top:179px" width="13" height="13" shape-rendering="crispEdges"><rect x="0" y="0" width="13" height="13" fill="#ffffff"/><rect x="0" y="0" width="12" height="1" fill="#a0a0a0"/><rect x="0" y="0" width="1" height="12" fill="#a0a0a0"/><rect x="1" y="1" width="10" height="1" fill="#696969"/><rect x="1" y="1" width="1" height="10" fill="#696969"/><rect x="1" y="11" width="11" height="1" fill="#e3e3e3"/><rect x="11" y="1" width="1" height="11" fill="#e3e3e3"/><path d="M9 3h1v1h-1zM8 4h2v1h-2zM3 5h1v1h-1zM7 5h3v1h-3zM3 6h2v1h-2zM6 6h3v1h-3zM3 7h5v1h-5zM4 8h3v1h-3zM5 9h1v1h-1z" fill="#000"/></svg>
<div class="spin" style="left:805px;top:179px;width:74px;height:19px">
<div class="t" style="left:2px;top:2px">2200</div>
<svg class="sp" style="left:63px;top:1px" width="10" height="17" shape-rendering="crispEdges"><rect x="1" y="0" width="8" height="16" fill="#ededed"/><rect x="1" y="0" width="8" height="1" fill="#fafafa"/><rect x="1" y="9" width="8" height="1" fill="#fafafa"/><rect x="0" y="0" width="1" height="17" fill="#a9abb1"/><rect x="9" y="0" width="1" height="17" fill="#a9abb1"/><rect x="0" y="16" width="10" height="1" fill="#a9abb1"/><rect x="0" y="7" width="10" height="2" fill="#a9abb1"/><path d="M4 2h1v1h-1zM3 3h3v1h-3zM2 4h5v1h-5zM2 11h5v1h-5zM3 12h3v1h-3zM4 13h1v1h-1z" fill="#4d6cbd"/></svg>
</div>
<svg style="left:785px;top:196px" width="20" height="1" shape-rendering="crispEdges"><rect x="0" y="0" width="7" height="1" fill="#000"/><rect x="9" y="0" width="2" height="1" fill="#000"/><rect x="14" y="0" width="2" height="1" fill="#000"/></svg>
<div class="t" style="left:785px;top:206px">S<span style="font-size:8.5px;position:relative;top:3px;margin-left:0.5px;letter-spacing:-0.6px;color:#000">21</span><span style="margin-left:2px">=</span> -0.33175216</div>
<div class="t" style="left:785px;top:222px">S<span style="font-size:8.5px;position:relative;top:3px;margin-left:0.5px;letter-spacing:-0.6px;color:#000">11</span><span style="margin-left:5px">=</span> -37.043844</div>
<div class="t" style="left:785px;top:238px">t<span style="font-size:8.5px;position:relative;top:3px;margin-left:0.5px;letter-spacing:-0.6px;color:#000">Gd</span><span style="margin-left:2px">=</span> 13.780171</div>
<div class="abs" style="left:778px;top:276px;width:110px;height:46px;border:1px solid #fff"></div>
<div class="abs" style="left:777px;top:275px;width:110px;height:46px;border:1px solid #a0a0a0"></div>
<div class="abs" style="left:785px;top:274px;width:48px;height:3px;background:#f0f0f0"></div>
<div class="t" style="left:788px;top:271px">Marker 3</div>
<svg class="cb" style="left:785px;top:293px" width="13" height="13" shape-rendering="crispEdges"><rect x="0" y="0" width="13" height="13" fill="#ffffff"/><rect x="0" y="0" width="12" height="1" fill="#a0a0a0"/><rect x="0" y="0" width="1" height="12" fill="#a0a0a0"/><rect x="1" y="1" width="10" height="1" fill="#696969"/><rect x="1" y="1" width="1" height="10" fill="#696969"/><rect x="1" y="11" width="11" height="1" fill="#e3e3e3"/><rect x="11" y="1" width="1" height="11" fill="#e3e3e3"/></svg>
<div class="spin" style="left:805px;top:293px;width:74px;height:19px">
<div class="t" style="left:2px;top:2px">2107.6013</div>
<svg class="sp" style="left:63px;top:1px" width="10" height="17" shape-rendering="crispEdges"><rect x="1" y="0" width="8" height="16" fill="#ededed"/><rect x="1" y="0" width="8" height="1" fill="#fafafa"/><rect x="1" y="9" width="8" height="1" fill="#fafafa"/><rect x="0" y="0" width="1" height="17" fill="#a9abb1"/><rect x="9" y="0" width="1" height="17" fill="#a9abb1"/><rect x="0" y="16" width="10" height="1" fill="#a9abb1"/><rect x="0" y="7" width="10" height="2" fill="#a9abb1"/><path d="M4 2h1v1h-1zM3 3h3v1h-3zM2 4h5v1h-5zM2 11h5v1h-5zM3 12h3v1h-3zM4 13h1v1h-1z" fill="#4d6cbd"/></svg>
</div>
<svg style="left:785px;top:310px" width="20" height="1" shape-rendering="crispEdges"><rect x="0" y="0" width="7" height="1" fill="#000"/><rect x="9" y="0" width="2" height="1" fill="#000"/></svg>
<div class="abs" style="left:778px;top:340px;width:110px;height:45px;border:1px solid #fff"></div>
<div class="abs" style="left:777px;top:339px;width:110px;height:45px;border:1px solid #a0a0a0"></div>
<div class="abs" style="left:785px;top:338px;width:48px;height:3px;background:#f0f0f0"></div>
<div class="t" style="left:788px;top:335px">Marker 4</div>
<svg class="cb" style="left:785px;top:357px" width="13" height="13" shape-rendering="crispEdges"><rect x="0" y="0" width="13" height="13" fill="#ffffff"/><rect x="0" y="0" width="12" height="1" fill="#a0a0a0"/><rect x="0" y="0" width="1" height="12" fill="#a0a0a0"/><rect x="1" y="1" width="10" height="1" fill="#696969"/><rect x="1" y="1" width="1" height="10" fill="#696969"/><rect x="1" y="11" width="11" height="1" fill="#e3e3e3"/><rect x="11" y="1" width="1" height="11" fill="#e3e3e3"/></svg>
<div class="spin" style="left:805px;top:357px;width:74px;height:19px">
<div class="t" style="left:2px;top:2px">2202.4013</div>
<svg class="sp" style="left:63px;top:1px" width="10" height="17" shape-rendering="crispEdges"><rect x="1" y="0" width="8" height="16" fill="#ededed"/><rect x="1" y="0" width="8" height="1" fill="#fafafa"/><rect x="1" y="9" width="8" height="1" fill="#fafafa"/><rect x="0" y="0" width="1" height="17" fill="#a9abb1"/><rect x="9" y="0" width="1" height="17" fill="#a9abb1"/><rect x="0" y="16" width="10" height="1" fill="#a9abb1"/><rect x="0" y="7" width="10" height="2" fill="#a9abb1"/><path d="M4 2h1v1h-1zM3 3h3v1h-3zM2 4h5v1h-5zM2 11h5v1h-5zM3 12h3v1h-3zM4 13h1v1h-1z" fill="#4d6cbd"/></svg>
</div>
<svg style="left:785px;top:374px" width="20" height="1" shape-rendering="crispEdges"><rect x="-1" y="0" width="7" height="1" fill="#000"/><rect x="10" y="0" width="7" height="1" fill="#000"/></svg>
<div class="abs" style="left:372px;top:398px;width:389px;height:243px;border:1px solid #3a3a3a;border-radius:5px 5px 0 0;background:#d6e3f1"></div>
<div class="abs" style="left:373px;top:399px;width:387px;height:241px;border:1px solid #eaf0f8;border-radius:4px 4px 0 0;background:linear-gradient(#bdcedd,#d8e4f1 23px,#d6e3f1 23px)"></div>
<div class="abs" style="left:375px;top:423px;width:385px;height:217px;background:#f0f0f0"></div>
<svg style="left:377px;top:403px" width="16" height="16"><defs><radialGradient id="dg" cx="0.4" cy="0.45" r="0.6"><stop offset="0" stop-color="#ffe680"/><stop offset="0.7" stop-color="#f2bc2c"/><stop offset="1" stop-color="#c88a10"/></radialGradient><radialGradient id="bg" cx="0.4" cy="0.55" r="0.6"><stop offset="0" stop-color="#ffd890"/><stop offset="0.6" stop-color="#f39a40"/><stop offset="1" stop-color="#d0501a"/></radialGradient></defs><ellipse cx="7.7" cy="11.4" rx="7.1" ry="4" fill="url(#dg)" stroke="#b98214" stroke-width="0.6"/><path d="M5.3 5 L6.1 8.8 M10.6 6 L9.6 11" stroke="#2e3440" stroke-width="1.5"/><circle cx="4.1" cy="2.9" r="2.3" fill="url(#bg)" stroke="#b05a20" stroke-width="0.4"/><circle cx="11.1" cy="3" r="2.9" fill="url(#bg)" stroke="#b05a20" stroke-width="0.4"/></svg>
<div class="t" style="transform:none;left:397px;top:405px;font-size:12px;line-height:15px;letter-spacing:0.35px;color:#3c4a5c">Approximation</div>
<div class="abs" style="left:727px;top:403px;width:29px;height:15px;border:1px solid #8d9db4;border-radius:2px;background:linear-gradient(#e2eaf3,#cfdbe8 50%,#c3d1e2);box-shadow:inset 0 0 0 1px rgba(255,255,255,0.45)"></div>
<svg style="left:727px;top:403px" width="31" height="17"><path d="M10.2 4.5 L13.2 4.5 L15.5 6.6 L17.8 4.5 L20.8 4.5 L17.2 8.5 L20.8 12.5 L17.8 12.5 L15.5 10.4 L13.2 12.5 L10.2 12.5 L13.8 8.5 Z" fill="#f2f2f2" stroke="#4a4a4a" stroke-width="1.1" stroke-linejoin="round"/></svg>
<div class="t" style="left:384px;top:443px;">Start:</div>
<div class="t" style="left:384px;top:475px;">Stop:</div>
<div class="t" style="left:384px;top:506px;">Goal:</div>
<div class="t" style="left:384px;top:539px;">Type:</div>
<div class="spin" style="left:423px;top:437px;width:87px;height:19px">
<div class="t" style="left:2px;top:2px">1920</div>
<svg class="sp" style="left:76px;top:1px" width="10" height="17" shape-rendering="crispEdges"><rect x="1" y="0" width="8" height="16" fill="#ededed"/><rect x="1" y="0" width="8" height="1" fill="#fafafa"/><rect x="1" y="9" width="8" height="1" fill="#fafafa"/><rect x="0" y="0" width="1" height="17" fill="#a9abb1"/><rect x="9" y="0" width="1" height="17" fill="#a9abb1"/><rect x="0" y="16" width="10" height="1" fill="#a9abb1"/><rect x="0" y="7" width="10" height="2" fill="#a9abb1"/><path d="M4 2h1v1h-1zM3 3h3v1h-3zM2 4h5v1h-5zM2 11h5v1h-5zM3 12h3v1h-3zM4 13h1v1h-1z" fill="#4d6cbd"/></svg>
</div>
<div class="spin" style="left:423px;top:471px;width:87px;height:19px">
<div class="t" style="left:2px;top:2px">1983</div>
<svg class="sp" style="left:76px;top:1px" width="10" height="17" shape-rendering="crispEdges"><rect x="1" y="0" width="8" height="16" fill="#ededed"/><rect x="1" y="0" width="8" height="1" fill="#fafafa"/><rect x="1" y="9" width="8" height="1" fill="#fafafa"/><rect x="0" y="0" width="1" height="17" fill="#a9abb1"/><rect x="9" y="0" width="1" height="17" fill="#a9abb1"/><rect x="0" y="16" width="10" height="1" fill="#a9abb1"/><rect x="0" y="7" width="10" height="2" fill="#a9abb1"/><path d="M4 2h1v1h-1zM3 3h3v1h-3zM2 4h5v1h-5zM2 11h5v1h-5zM3 12h3v1h-3zM4 13h1v1h-1z" fill="#4d6cbd"/></svg>
</div>
<div class="spin" style="left:423px;top:503px;width:87px;height:19px">
<div class="t" style="left:2px;top:2px">-43</div>
<svg class="sp" style="left:76px;top:1px" width="10" height="17" shape-rendering="crispEdges"><rect x="1" y="0" width="8" height="16" fill="#ededed"/><rect x="1" y="0" width="8" height="1" fill="#fafafa"/><rect x="1" y="9" width="8" height="1" fill="#fafafa"/><rect x="0" y="0" width="1" height="17" fill="#a9abb1"/><rect x="9" y="0" width="1" height="17" fill="#a9abb1"/><rect x="0" y="16" width="10" height="1" fill="#a9abb1"/><rect x="0" y="7" width="10" height="2" fill="#a9abb1"/><path d="M4 2h1v1h-1zM3 3h3v1h-3zM2 4h5v1h-5zM2 11h5v1h-5zM3 12h3v1h-3zM4 13h1v1h-1z" fill="#4d6cbd"/></svg>
</div>
<div class="abs" style="left:423px;top:535px;width:84px;height:16px;border:2px solid;border-color:#a0a0a0 #fff #fff #a0a0a0;background:#fff"></div>
<div class="abs" style="left:424px;top:536px;width:84px;height:16px;border:1px solid;border-color:#696969 #e3e3e3 #e3e3e3 #696969"></div>
<div class="t" style="left:428px;top:540px;color:#6d6d6d;letter-spacing:-0.3px">Transmission</div>
<div class="abs" style="left:493px;top:537px;width:14px;height:14px;border:1px solid;border-color:#fff #696969 #696969 #fff;background:#f0f0f0"></div>
<div class="abs" style="left:494px;top:538px;width:12px;height:12px;border:1px solid;border-color:#e3e3e3 #a0a0a0 #a0a0a0 #e3e3e3"></div>
<svg style="left:498px;top:544px" width="7" height="4" shape-rendering="crispEdges"><path d="M0 0h7v1h-7zM1 1h5v1h-5zM2 2h3v1h-3zM3 3h1v1h-1z" fill="#808080"/></svg>
<div class="abs" style="left:383px;top:567px;width:55px;height:23px;border:1px solid;border-color:#fff #696969 #696969 #fff;background:#f0f0f0"></div>
<div class="abs" style="left:384px;top:568px;width:53px;height:21px;border:1px solid;border-color:#e3e3e3 #a0a0a0 #a0a0a0 #e3e3e3"></div>
<div class="t c" style="left:383px;top:573px;width:57px;text-align:center">Add</div>
<div class="abs" style="left:455px;top:567px;width:55px;height:23px;border:1px solid;border-color:#fff #696969 #696969 #fff;background:#f0f0f0"></div>
<div class="abs" style="left:456px;top:568px;width:53px;height:21px;border:1px solid;border-color:#e3e3e3 #a0a0a0 #a0a0a0 #e3e3e3"></div>
<div class="t c" style="left:455px;top:573px;width:57px;text-align:center">Remove</div>
<div class="abs" style="left:383px;top:607px;width:127px;height:23px;border:1px solid;border-color:#fff #696969 #696969 #fff;background:#f0f0f0"></div>
<div class="abs" style="left:384px;top:608px;width:125px;height:21px;border:1px solid;border-color:#e3e3e3 #a0a0a0 #a0a0a0 #e3e3e3"></div>
<div class="t c" style="left:383px;top:613px;width:129px;text-align:center">Solve Approximation</div>
<div class="abs" style="left:527px;top:437px;width:221px;height:191px;border:2px solid;border-color:#a0a0a0 #fff #fff #a0a0a0;background:#fff"></div>
<div class="abs" style="left:528px;top:438px;width:221px;height:191px;border:1px solid;border-color:#696969 #e3e3e3 #e3e3e3 #696969"></div>
<div class="abs" style="left:529px;top:439px;width:221px;height:17px;background:#f0f0f0;border-bottom:1px solid #000"></div>
<div class="abs" style="left:529px;top:439px;width:221px;height:1px;background:#fff"></div>
<div class="abs" style="left:591px;top:439px;width:1px;height:17px;background:#000"></div>
<div class="abs" style="left:590px;top:440px;width:1px;height:16px;background:#a0a0a0"></div>
<div class="abs" style="left:654px;top:439px;width:1px;height:17px;background:#000"></div>
<div class="abs" style="left:653px;top:440px;width:1px;height:16px;background:#a0a0a0"></div>
<div class="abs" style="left:529px;top:439px;width:1px;height:17px;background:#fff"></div>
<div class="abs" style="left:592px;top:439px;width:1px;height:17px;background:#fff"></div>
<div class="abs" style="left:655px;top:439px;width:1px;height:17px;background:#fff"></div>
<div class="abs" style="left:749px;top:440px;width:1px;height:16px;background:#a0a0a0"></div>
<div class="t" style="left:532px;top:442px;">Start</div>
<div class="t" style="left:595px;top:442px;">Stop</div>
<div class="t" style="left:657px;top:442px;">Goal</div>
<div class="abs" style="left:529px;top:458px;width:221px;height:18px;background:#3399ff"></div>
<div class="abs" style="left:591px;top:458px;width:1px;height:18px;background:#a0a0a0"></div>
<div class="abs" style="left:654px;top:458px;width:1px;height:18px;background:#a0a0a0"></div>
<div class="t" style="left:532px;top:461px;color:#fff">1920</div>
<div class="t" style="left:595px;top:461px;color:#fff">1983</div>
<div class="t" style="left:657px;top:461px;color:#fff">S21 &lt; -43 dB</div>
</body></html>
